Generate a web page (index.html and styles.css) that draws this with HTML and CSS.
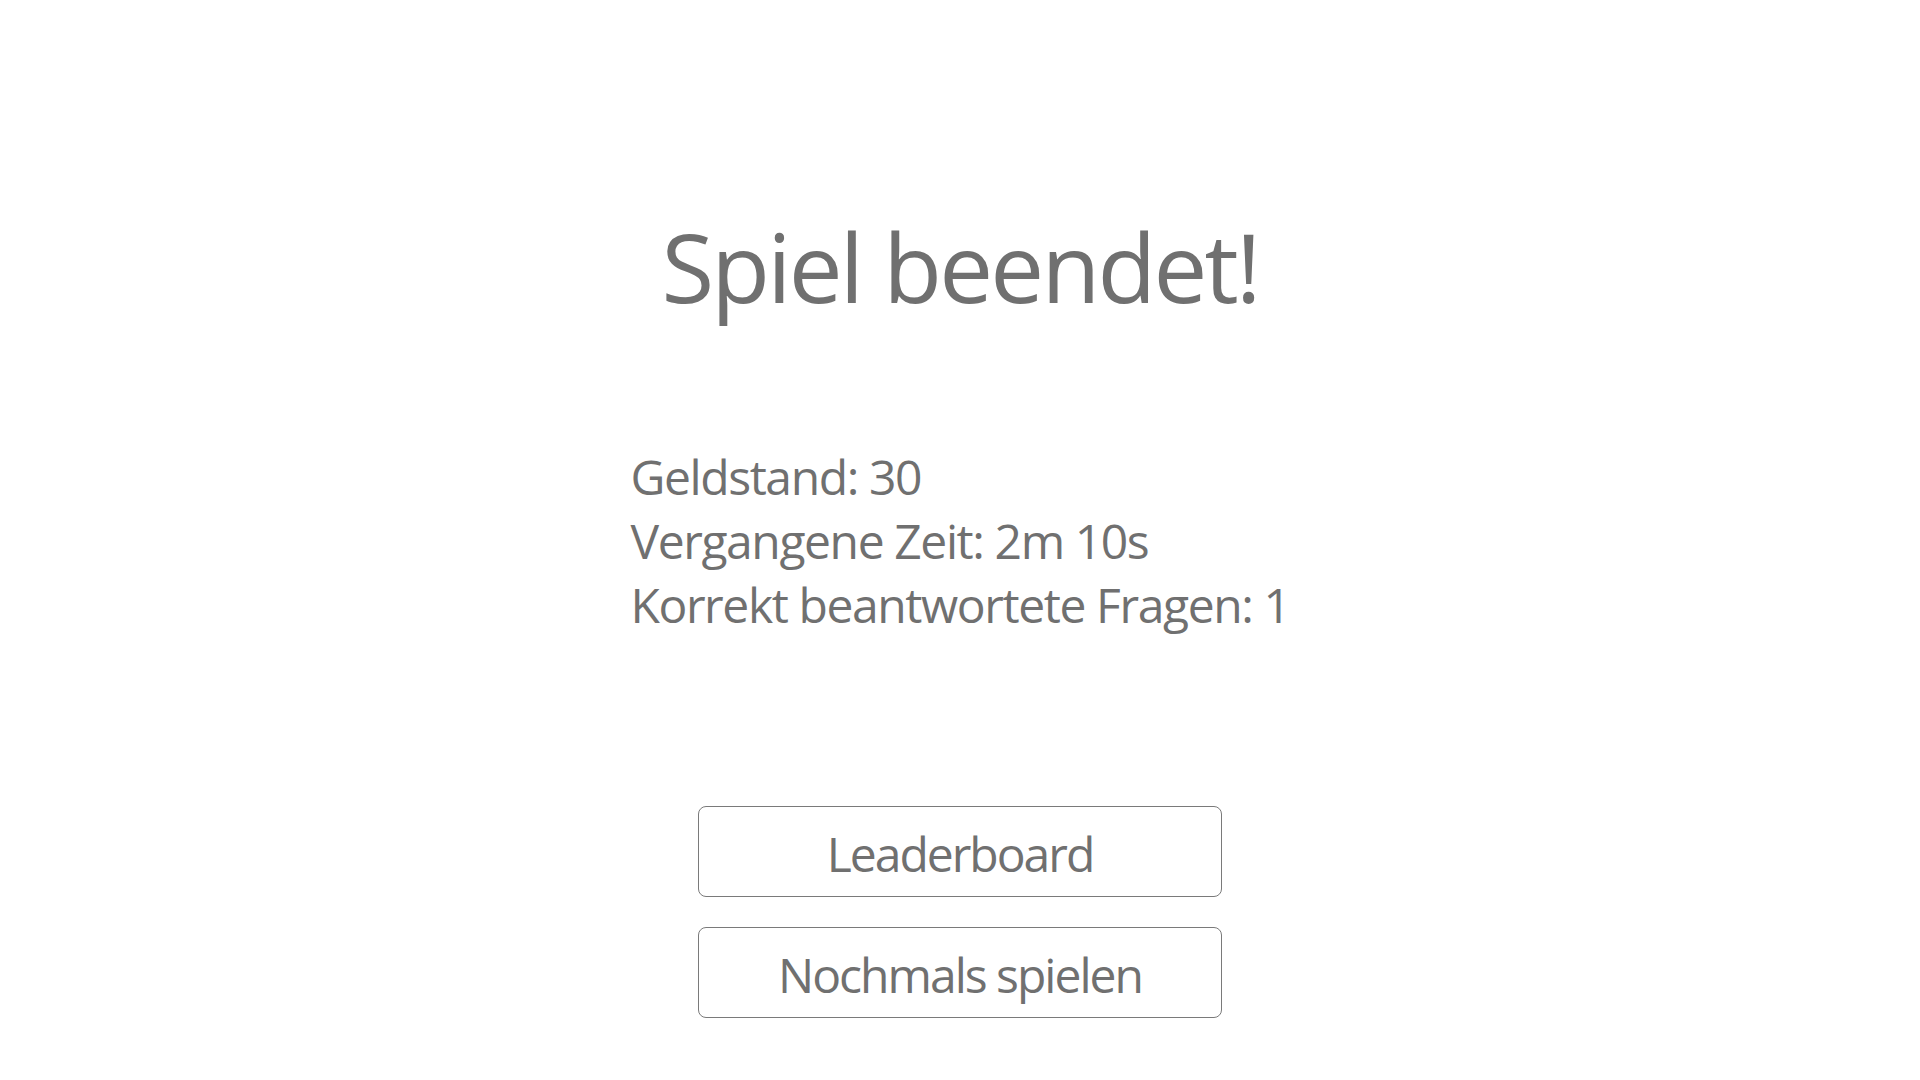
FILE: index.html
```html
<!DOCTYPE html>
<html lang="de">
<head>
<meta charset="utf-8">
<title>Spiel beendet</title>
<link rel="stylesheet" href="styles.css">
</head>
<body>
<main class="screen">
  <h1 class="title">Spiel beendet!</h1>
  <div class="stats">
    <p class="stat">Geldstand: 30</p>
    <p class="stat">Vergangene Zeit: 2m 10s</p>
    <p class="stat">Korrekt beantwortete Fragen: 1</p>
  </div>
  <div class="actions">
    <button class="btn">Leaderboard</button>
    <button class="btn">Nochmals spielen</button>
  </div>
</main>
</body>
</html>
```
FILE: styles.css
```css
html, body {
  margin: 0;
  padding: 0;
  background: #ffffff;
}
body {
  font-family: "Open Sans", "Noto Sans", sans-serif;
  color: #707070;
}
.screen {
  width: 1920px;
  height: 1080px;
  display: flex;
  flex-direction: column;
  align-items: center;
  box-sizing: border-box;
  padding-top: 201px;
}
.title {
  margin: 0;
  font-size: 96px;
  font-weight: 400;
  line-height: 130px;
  letter-spacing: -2.8px;
}
.stats {
  margin-top: 114px;
}
.stat {
  margin: 0;
  font-size: 48px;
  line-height: 64px;
  letter-spacing: -1.4px;
}
.actions {
  margin-top: 169px;
  display: flex;
  flex-direction: column;
  gap: 30px;
}
.btn {
  width: 524px;
  height: 91px;
  box-sizing: border-box;
  border: 1px solid #7a7a7a;
  border-radius: 8px;
  background: #ffffff;
  color: #707070;
  font-family: "Open Sans", "Noto Sans", sans-serif;
  font-size: 48px;
  letter-spacing: -2px;
  padding: 4px 0 0 0;
  line-height: 65px;
}
```
